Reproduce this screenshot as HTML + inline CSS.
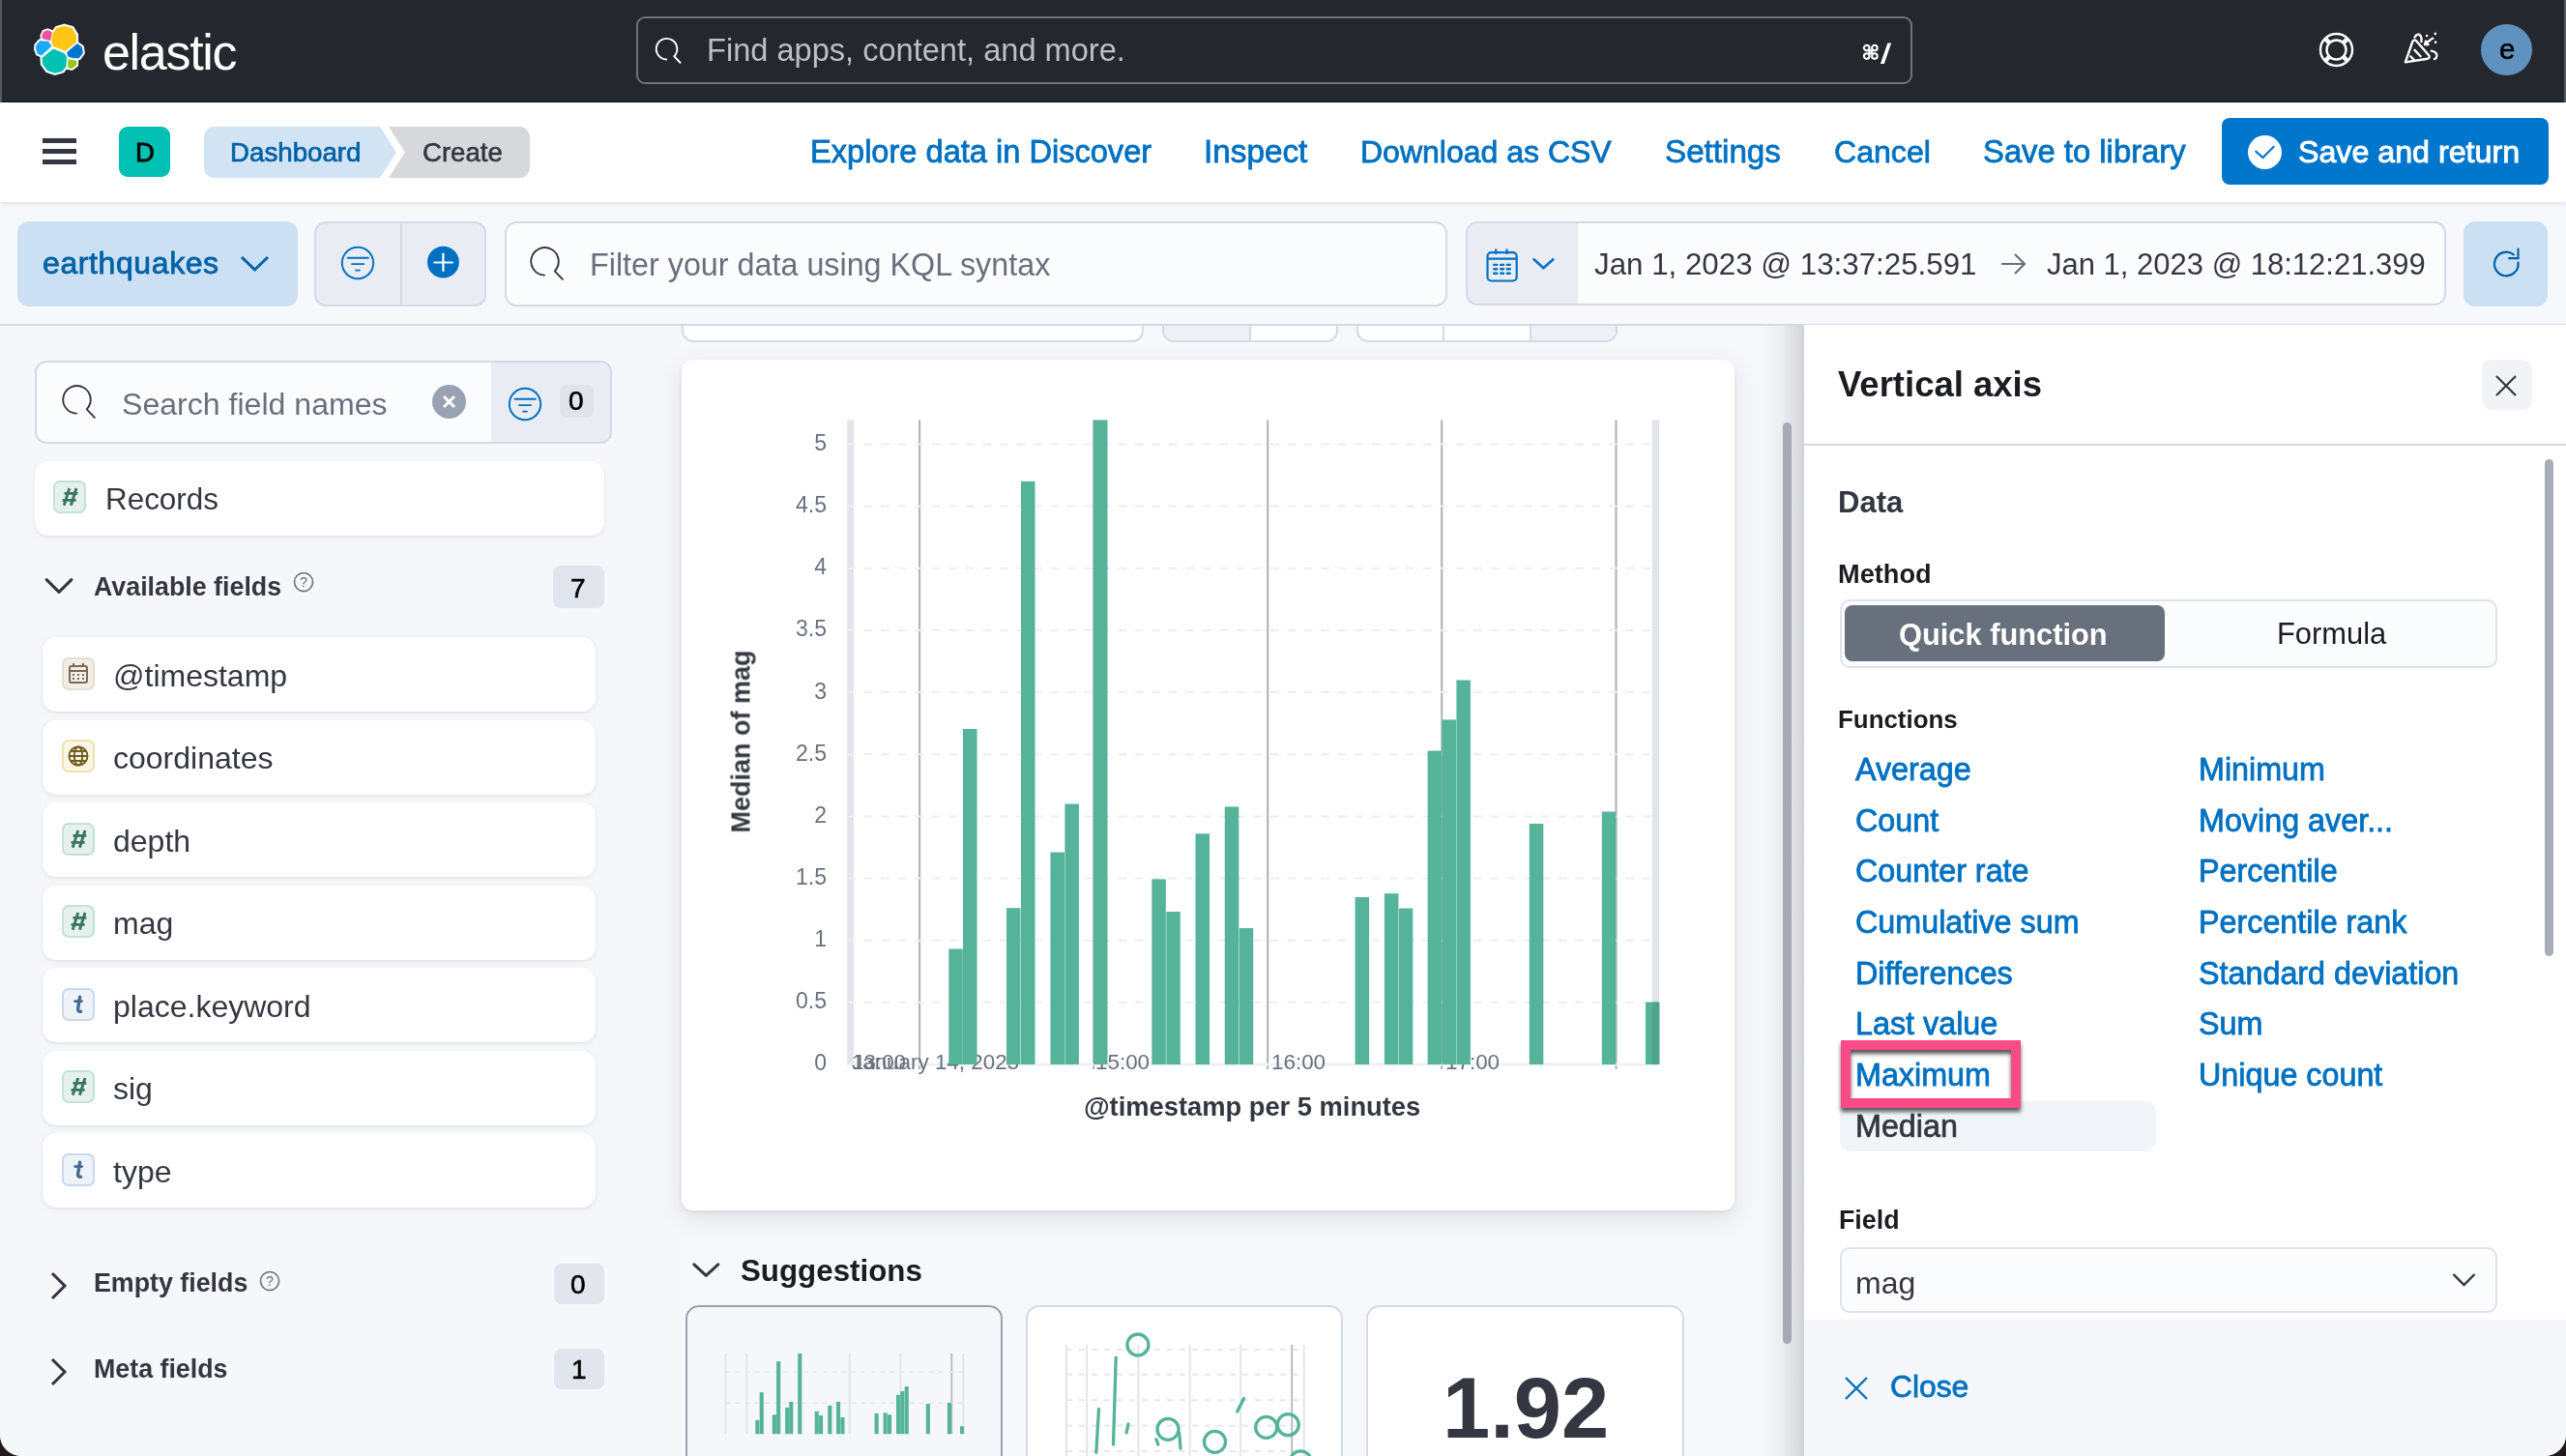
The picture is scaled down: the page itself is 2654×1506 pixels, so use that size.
<!DOCTYPE html><html><head><meta charset="utf-8"><style>
html,body{margin:0;padding:0;}
body{width:2654px;height:1506px;overflow:hidden;position:relative;background:#221a1a;font-family:"Liberation Sans", sans-serif;}
#win{position:absolute;left:0;top:0;width:2654px;height:1506px;background:#F7F8FC;border-radius:0 0 22px 22px;overflow:hidden;}
.t{position:absolute;white-space:nowrap;line-height:1;will-change:transform;}
.r{position:absolute;}
</style></head><body><div id="win">
<div class="r" style="left:0.0px;top:336.0px;width:704.0px;height:1170.0px;background:#F5F7FA;border-radius:0;"></div>
<div class="r" style="left:0.0px;top:0.0px;width:2654.0px;height:106.0px;background:#25272F;border-radius:0;"></div>
<div class="r" style="left:0.0px;top:105.0px;width:2654.0px;height:1.0px;background:#16181D;border-radius:0;"></div>
<div class="r" style="left:0.0px;top:0.0px;width:2.0px;height:106.0px;background:#55585F;border-radius:0;"></div>
<div class="r" style="left:2652.0px;top:0.0px;width:2.0px;height:106.0px;background:#55585F;border-radius:0;"></div>
<svg class="r" style="left:30px;top:20px" width="65" height="65" viewBox="0 0 1456 1456"><polygon points="300,380 340,290 430,255 530,295 495,490 310,445" fill="#fff" stroke="#fff" stroke-width="90" stroke-linejoin="round"/><polygon points="540,340 640,200 820,150 1000,200 1100,360 1100,530 840,740 540,620 520,500" fill="#fff" stroke="#fff" stroke-width="90" stroke-linejoin="round"/><polygon points="165,600 250,500 450,510 525,620 290,840 200,800 160,700" fill="#fff" stroke="#fff" stroke-width="90" stroke-linejoin="round"/><polygon points="880,760 1120,560 1230,640 1250,780 1160,900 1000,895 900,860" fill="#fff" stroke="#fff" stroke-width="90" stroke-linejoin="round"/><polygon points="300,890 560,680 830,790 880,880 860,1100 780,1200 600,1250 420,1190 310,1040" fill="#fff" stroke="#fff" stroke-width="90" stroke-linejoin="round"/><polygon points="910,930 1100,960 1100,1060 990,1140 900,1120" fill="#fff" stroke="#fff" stroke-width="90" stroke-linejoin="round"/><polygon points="304,379 342,292 429,259 525,297 492,485 313,442" fill="#F04E98" stroke="#F04E98" stroke-width="14" stroke-linejoin="round"/><polygon points="549,342 645,207 819,159 993,207 1089,362 1089,526 838,728 549,612 529,497" fill="#FEC514" stroke="#FEC514" stroke-width="14" stroke-linejoin="round"/><polygon points="169,602 251,505 444,515 517,621 290,833 203,795 165,698" fill="#1BA9F5" stroke="#1BA9F5" stroke-width="14" stroke-linejoin="round"/><polygon points="887,760 1118,567 1225,645 1244,780 1157,895 1003,891 906,857" fill="#0077CC" stroke="#0077CC" stroke-width="14" stroke-linejoin="round"/><polygon points="311,894 562,691 822,797 871,884 851,1097 774,1193 601,1241 427,1183 321,1039" fill="#00BFB3" stroke="#00BFB3" stroke-width="14" stroke-linejoin="round"/><polygon points="913,934 1096,963 1096,1059 990,1137 904,1117" fill="#93C90E" stroke="#93C90E" stroke-width="14" stroke-linejoin="round"/></svg>
<div class="t" style="left:106.0px;top:27.7px;font-size:52px;color:#FFFFFF;font-weight:400;letter-spacing:-1.3px;">elastic</div>
<div class="r" style="left:657.5px;top:17.0px;width:1320.0px;height:70.0px;background:#25272F;border-radius:9px;border:2px solid #717378;box-sizing:border-box;"></div>
<svg class="r" style="left:671.0px;top:33.3px" width="37.9" height="37.9" viewBox="0 0 50 50"><path d="M24 37.6 A14.25 14.25 0 1 1 34.7 33.3 L42.9 41.9" fill="none" stroke="#FFFFFF" stroke-width="2.51" stroke-linecap="round" stroke-linejoin="round"/></svg>
<div class="t" style="left:731.0px;top:35.7px;font-size:32.6px;color:#BDBFC4;font-weight:400;">Find apps, content, and more.</div>
<svg class="r" style="left:1925.0px;top:44.0px;" width="34" height="24" viewBox="0 0 34 24"><g fill="none" stroke="#fff" stroke-width="2.1"><path d="M8.4 8.4 H11.2 V11.3 H8.4 Z"/><circle cx="5.7" cy="5.6" r="2.8"/><circle cx="13.9" cy="5.6" r="2.8"/><circle cx="5.7" cy="14.1" r="2.8"/><circle cx="13.9" cy="14.1" r="2.8"/></g><polygon points="19.9,22 23.8,22 31.2,0.6 27.4,0.6" fill="#fff"/></svg>
<svg class="r" style="left:2396.0px;top:31.0px;" width="41" height="41" viewBox="0 0 41 41"><g fill="none" stroke="#fff" stroke-width="2.4">
<circle cx="20.5" cy="20.5" r="16.5"/><circle cx="20.5" cy="20.5" r="10"/>
<path d="M8.8 8.8 L13.4 13.4 M32.2 8.8 L27.6 13.4 M8.8 32.2 L13.4 27.6 M32.2 32.2 L27.6 27.6" stroke-width="4.5"/></g></svg>
<svg class="r" style="left:2380px;top:15px" width="274" height="75" viewBox="0 0 2566 702"><g fill="none" stroke="#fff" stroke-width="22" stroke-linecap="round" stroke-linejoin="round"><path d="M1010 462 L1080 262 Q1095 235 1115 255 L1238 395 Q1252 418 1225 428 Z"/><path d="M1060 405 L1092 437 M1100 345 L1158 405"/><path d="M1100 220 Q1130 170 1160 210 Q1170 230 1165 262"/><path d="M1198 290 L1262 238 M1198 290 L1232 292 M1198 290 L1208 258"/><path d="M1262 352 Q1318 362 1315 402 Q1312 425 1292 432"/></g><g fill="#fff"><circle cx="1218" cy="205" r="12"/><circle cx="1275" cy="232" r="12"/><circle cx="1300" cy="186" r="12"/><circle cx="1302" cy="268" r="12"/></g></svg>
<div class="r" style="left:2566.0px;top:25.0px;width:53.0px;height:53.0px;background:#6092C0;border-radius:50%;"></div>
<div class="t" style="left:2584.5px;top:36.0px;font-size:29.5px;color:#000;font-weight:400;-webkit-text-stroke:0.5px #000;">e</div>
<div class="r" style="left:0.0px;top:106.0px;width:2654.0px;height:103.0px;background:#FFFFFF;border-radius:0;box-shadow:0 2px 5px rgba(52,55,65,0.12);"></div>
<div class="r" style="left:44.0px;top:143.1px;width:35.0px;height:4.7px;background:#343741;border-radius:0;"></div>
<div class="r" style="left:44.0px;top:154.0px;width:35.0px;height:4.7px;background:#343741;border-radius:0;"></div>
<div class="r" style="left:44.0px;top:164.9px;width:35.0px;height:4.7px;background:#343741;border-radius:0;"></div>
<div class="r" style="left:123.3px;top:131.0px;width:52.7px;height:52.0px;background:#00BFB3;border-radius:9px;"></div>
<div class="t" style="left:139.5px;top:143.9px;font-size:27.5px;color:#000;font-weight:400;-webkit-text-stroke:0.8px #000;">D</div>
<svg class="r" style="left:211.0px;top:131.0px;" width="338" height="53" viewBox="0 0 338 53"><path d="M11 0 L182 0 L199 26.5 L182 53 L11 53 A11 11 0 0 1 0 42 L0 11 A11 11 0 0 1 11 0 Z" fill="#D2E3F4"/>
<path d="M191 0 L326 0 A11 11 0 0 1 337 11 L337 42 A11 11 0 0 1 326 53 L191 53 L207.8 26.5 Z" fill="#D7D8DB"/></svg>
<div class="t" style="left:237.5px;top:143.7px;font-size:27.7px;color:#0061A6;font-weight:400;-webkit-text-stroke:0.7px #0061A6;">Dashboard</div>
<div class="t" style="left:436.5px;top:143.7px;font-size:27.6px;color:#343741;font-weight:400;-webkit-text-stroke:0.6px #343741;">Create</div>
<div class="t" style="left:837.5px;top:140.8px;font-size:32.6px;color:#0071C2;font-weight:400;-webkit-text-stroke:0.8px #0071C2;">Explore data in Discover</div>
<div class="t" style="left:1244.5px;top:140.2px;font-size:33.3px;color:#0071C2;font-weight:400;-webkit-text-stroke:0.8px #0071C2;">Inspect</div>
<div class="t" style="left:1407.0px;top:141.3px;font-size:32px;color:#0071C2;font-weight:400;-webkit-text-stroke:0.8px #0071C2;">Download as CSV</div>
<div class="t" style="left:1721.5px;top:140.3px;font-size:33.2px;color:#0071C2;font-weight:400;-webkit-text-stroke:0.8px #0071C2;">Settings</div>
<div class="t" style="left:1896.5px;top:141.2px;font-size:32.1px;color:#0071C2;font-weight:400;-webkit-text-stroke:0.8px #0071C2;">Cancel</div>
<div class="t" style="left:2051.0px;top:140.6px;font-size:32.8px;color:#0071C2;font-weight:400;-webkit-text-stroke:0.8px #0071C2;">Save to library</div>
<div class="r" style="left:2298.0px;top:122.4px;width:338.0px;height:69.1px;background:#0077CC;border-radius:8px;"></div>
<svg class="r" style="left:2324.0px;top:139.0px;" width="37" height="37" viewBox="0 0 37 37"><circle cx="18.5" cy="18.5" r="17.5" fill="#fff"/><path d="M9.2 17.6 L16.5 24.1 L27.7 12.7" fill="none" stroke="#0077CC" stroke-width="2.1" stroke-linecap="round"/></svg>
<div class="t" style="left:2377.0px;top:141.1px;font-size:32.2px;color:#FFFFFF;font-weight:400;-webkit-text-stroke:0.9px #FFFFFF;">Save and return</div>
<div class="r" style="left:0.0px;top:335.0px;width:2654.0px;height:2.0px;background:#D3DAE6;border-radius:0;"></div>
<div class="r" style="left:18.0px;top:229.0px;width:289.7px;height:87.8px;background:#CCE0F3;border-radius:12px;"></div>
<div class="t" style="left:44.0px;top:255.6px;font-size:32px;color:#0061A6;font-weight:400;-webkit-text-stroke:0.8px #0061A6;letter-spacing:0.6px;">earthquakes</div>
<svg class="r" style="left:247.0px;top:262.0px;" width="33" height="20" viewBox="0 0 33 20"><path d="M3 4 L16.5 17 L30 4" fill="none" stroke="#0061A6" stroke-width="3"/></svg>
<div class="r" style="left:325.0px;top:229.0px;width:178.3px;height:88.0px;background:#E9EDF3;border-radius:12px;border:2px solid #D3DAE6;box-sizing:border-box;"></div>
<div class="r" style="left:414.0px;top:229.0px;width:2.0px;height:88.0px;background:#D3DAE6;border-radius:0;"></div>
<svg class="r" style="left:349.5px;top:252.3px" width="40.0" height="40.0" viewBox="0 0 40 40"><g fill="none" stroke="#0071C2" stroke-width="1.95" stroke-linecap="round"><circle cx="20" cy="20" r="16.2"/><path d="M9.6 14.7 H30.9 M14 21.1 H26.2 M18 27.6 H21.9"/></g></svg>
<svg class="r" style="left:440.0px;top:253.0px;" width="37" height="37" viewBox="0 0 37 37"><circle cx="18.4" cy="18.2" r="16.4" fill="#0071C2"/><path d="M18.4 9.5 V27 M9.2 18.5 H27.9" stroke="#fff" stroke-width="2.2" stroke-linecap="round"/></svg>
<div class="r" style="left:521.5px;top:229.0px;width:975.5px;height:88.0px;background:#FBFCFD;border-radius:12px;border:2px solid #D3DAE6;box-sizing:border-box;"></div>
<svg class="r" style="left:538.8px;top:247.3px" width="50.0" height="50.0" viewBox="0 0 50 50"><path d="M24 37.6 A14.25 14.25 0 1 1 34.7 33.3 L42.9 41.9" fill="none" stroke="#343741" stroke-width="1.90" stroke-linecap="round" stroke-linejoin="round"/></svg>
<div class="t" style="left:610.0px;top:258.2px;font-size:32.3px;color:#69707D;font-weight:400;">Filter your data using KQL syntax</div>
<div class="r" style="left:1515.8px;top:228.8px;width:1014.2px;height:87.1px;background:#FBFCFD;border-radius:12px;border:2px solid #D3DAE6;box-sizing:border-box;"></div>
<div class="r" style="left:1517.8px;top:230.8px;width:114.2px;height:83.1px;background:#E9EDF3;border-radius:10px 0 0 10px;"></div>
<svg class="r" style="left:1535.0px;top:256.0px;" width="38" height="38" viewBox="0 0 38 38"><g fill="none" stroke="#0071C2" stroke-width="2.2"><rect x="3.5" y="5.2" width="30.2" height="29.3" rx="4"/><path d="M3.5 11.7 H33.7 M12.2 1.5 V7 M23.5 1.5 V7"/></g>
<g stroke="#0071C2" stroke-width="2.4" stroke-linecap="round"><path d="M10.3 17.9 H13.2 M17.2 17.9 H20 M23.8 17.9 H26.7 M10.3 22.3 H13.2 M17.2 22.3 H20 M23.8 22.3 H26.7 M10.3 26.7 H13.2 M17.2 26.7 H20 M23.8 26.7 H26.7"/></g></svg>
<svg class="r" style="left:1584.0px;top:264.0px;" width="26" height="16" viewBox="0 0 26 16"><path d="M2.5 4.3 L12.4 13.3 L22.4 4.3" fill="none" stroke="#0071C2" stroke-width="2.6" stroke-linecap="round" stroke-linejoin="round"/></svg>
<div class="t" style="left:1649.0px;top:258.0px;font-size:31.3px;color:#343741;font-weight:400;">Jan 1, 2023 @ 13:37:25.591</div>
<svg class="r" style="left:2068.0px;top:260.0px;" width="30" height="26" viewBox="0 0 30 26"><path d="M2 13 H26 M16 3 L26 13 L16 23" fill="none" stroke="#69707D" stroke-width="2.2"/></svg>
<div class="t" style="left:2117.0px;top:258.3px;font-size:31px;color:#343741;font-weight:400;">Jan 1, 2023 @ 18:12:21.399</div>
<div class="r" style="left:2548.0px;top:228.7px;width:87.0px;height:87.9px;background:#CCE0F3;border-radius:12px;"></div>
<svg class="r" style="left:2575.0px;top:254.0px;" width="36" height="36" viewBox="0 0 36 36"><g fill="none" stroke="#0061A6" stroke-width="2.2" stroke-linecap="round"><path d="M24.8 9.3 A12.3 12.3 0 1 0 29.5 17.6"/><path d="M29.5 3.5 V13.2 H20.2"/></g></svg>
<div class="r" style="left:35.5px;top:372.6px;width:597.9px;height:86.4px;background:#FBFCFD;border-radius:12px;border:2px solid #D3DAE6;box-sizing:border-box;"></div>
<div class="r" style="left:508.0px;top:374.6px;width:123.4px;height:82.4px;background:#E9EDF3;border-radius:0 10px 10px 0;"></div>
<svg class="r" style="left:55.2px;top:390.0px" width="50.0" height="50.0" viewBox="0 0 50 50"><path d="M24 37.6 A14.25 14.25 0 1 1 34.7 33.3 L42.9 41.9" fill="none" stroke="#343741" stroke-width="1.90" stroke-linecap="round" stroke-linejoin="round"/></svg>
<div class="t" style="left:126.0px;top:401.8px;font-size:32.1px;color:#69707D;font-weight:400;">Search field names</div>
<svg class="r" style="left:446.8px;top:398.0px;" width="35" height="35" viewBox="0 0 35 35"><circle cx="17.5" cy="17.5" r="17.5" fill="#98A2B3"/><path d="M12 12 L23 23 M23 12 L12 23" stroke="#fff" stroke-width="3"/></svg>
<svg class="r" style="left:523.4px;top:398.0px" width="40.0" height="40.0" viewBox="0 0 40 40"><g fill="none" stroke="#0071C2" stroke-width="1.95" stroke-linecap="round"><circle cx="20" cy="20" r="16.2"/><path d="M9.6 14.7 H30.9 M14 21.1 H26.2 M18 27.6 H21.9"/></g></svg>
<div class="r" style="left:578.8px;top:397.7px;width:34.9px;height:34.7px;background:#DFE4EC;border-radius:7px;"></div>
<div class="t" style="left:587.5px;top:401.3px;font-size:28px;color:#000;font-weight:400;-webkit-text-stroke:0.6px #000;">0</div>
<div class="r" style="left:35.5px;top:477.4px;width:589.2px;height:76.4px;background:#FFFFFF;border-radius:14px;box-shadow:0 1px 3px rgba(52,55,65,0.08),0 2px 6px rgba(52,55,65,0.05);"></div>
<div class="r" style="left:55.4px;top:497.3px;width:34.0px;height:34.0px;background:#E6F1EE;border-radius:7px;border:2px solid #C2E2D8;box-sizing:border-box;"></div>
<svg class="r" style="left:55.4px;top:497.3px;" width="34" height="34" viewBox="0 0 34 34"><g stroke="#387765" stroke-width="2.9" stroke-linecap="butt"><path d="M16.8 8 L11.2 25.8 M24 8 L18.4 25.8 M11.5 13.4 H25.3 M9.6 20.4 H23.6"/></g></svg>
<div class="t" style="left:108.5px;top:500.7px;font-size:31.4px;color:#343741;font-weight:400;">Records</div>
<svg class="r" style="left:45.0px;top:596.0px;" width="34" height="20" viewBox="0 0 34 20"><path d="M3.2 3.6 L16 16.4 L28.9 3.6" fill="none" stroke="#343741" stroke-width="3.2" stroke-linecap="round" stroke-linejoin="round"/></svg>
<div class="t" style="left:96.5px;top:593.9px;font-size:26.8px;color:#343741;font-weight:700;">Available fields</div>
<svg class="r" style="left:303.0px;top:591.0px;" width="22" height="22" viewBox="0 0 22 22"><circle cx="11" cy="11" r="9.5" fill="none" stroke="#69707D" stroke-width="1.6"/><text x="11" y="16" font-size="14" text-anchor="middle" fill="#69707D" font-family="Liberation Sans">?</text></svg>
<div class="r" style="left:572.0px;top:585.0px;width:52.7px;height:43.8px;background:#E0E5EE;border-radius:8px;"></div>
<div class="t" style="left:589.5px;top:594.8px;font-size:28px;color:#000;font-weight:400;-webkit-text-stroke:0.6px #000;">7</div>
<div class="r" style="left:44.2px;top:659.0px;width:571.8px;height:77.0px;background:#FFFFFF;border-radius:14px;box-shadow:0 1px 3px rgba(52,55,65,0.08),0 2px 6px rgba(52,55,65,0.05);"></div>
<div class="r" style="left:64.4px;top:679.5px;width:34.0px;height:34.0px;background:#F1EEE8;border-radius:7px;border:2px solid #E6DED0;box-sizing:border-box;"></div>
<svg class="r" style="left:70.4px;top:684.5px;" width="22" height="24" viewBox="0 0 22 24"><g fill="none" stroke="#7B6B50" stroke-width="2"><rect x="2" y="4" width="18" height="17" rx="2"/><path d="M2 9 H20 M6 1 V5 M16 1 V5"/></g><g fill="#7B6B50"><rect x="5" y="12" width="2" height="2"/><rect x="10" y="12" width="2" height="2"/><rect x="15" y="12" width="2" height="2"/><rect x="5" y="16" width="2" height="2"/><rect x="10" y="16" width="2" height="2"/><rect x="15" y="16" width="2" height="2"/></g></svg>
<div class="t" style="left:116.5px;top:682.5px;font-size:32px;color:#343741;font-weight:400;">@timestamp</div>
<div class="r" style="left:44.2px;top:744.5px;width:571.8px;height:77.0px;background:#FFFFFF;border-radius:14px;box-shadow:0 1px 3px rgba(52,55,65,0.08),0 2px 6px rgba(52,55,65,0.05);"></div>
<div class="r" style="left:64.4px;top:765.0px;width:34.0px;height:34.0px;background:#FBF6E4;border-radius:7px;border:2px solid #EFE1AE;box-sizing:border-box;"></div>
<svg class="r" style="left:69.4px;top:770.0px;" width="24" height="24" viewBox="0 0 24 24"><g fill="none" stroke="#6F5E20" stroke-width="1.9"><circle cx="12" cy="12" r="9.5"/><path d="M2.5 12 H21.5 M4.5 7 H19.5 M4.5 17 H19.5"/><ellipse cx="12" cy="12" rx="4.2" ry="9.5"/></g></svg>
<div class="t" style="left:116.5px;top:768.0px;font-size:32px;color:#343741;font-weight:400;">coordinates</div>
<div class="r" style="left:44.2px;top:830.0px;width:571.8px;height:77.0px;background:#FFFFFF;border-radius:14px;box-shadow:0 1px 3px rgba(52,55,65,0.08),0 2px 6px rgba(52,55,65,0.05);"></div>
<div class="r" style="left:64.4px;top:850.5px;width:34.0px;height:34.0px;background:#E6F1EE;border-radius:7px;border:2px solid #C2E2D8;box-sizing:border-box;"></div>
<svg class="r" style="left:64.4px;top:850.5px;" width="34" height="34" viewBox="0 0 34 34"><g stroke="#387765" stroke-width="2.9" stroke-linecap="butt"><path d="M16.8 8 L11.2 25.8 M24 8 L18.4 25.8 M11.5 13.4 H25.3 M9.6 20.4 H23.6"/></g></svg>
<div class="t" style="left:116.5px;top:853.5px;font-size:32px;color:#343741;font-weight:400;">depth</div>
<div class="r" style="left:44.2px;top:915.5px;width:571.8px;height:77.0px;background:#FFFFFF;border-radius:14px;box-shadow:0 1px 3px rgba(52,55,65,0.08),0 2px 6px rgba(52,55,65,0.05);"></div>
<div class="r" style="left:64.4px;top:936.0px;width:34.0px;height:34.0px;background:#E6F1EE;border-radius:7px;border:2px solid #C2E2D8;box-sizing:border-box;"></div>
<svg class="r" style="left:64.4px;top:936.0px;" width="34" height="34" viewBox="0 0 34 34"><g stroke="#387765" stroke-width="2.9" stroke-linecap="butt"><path d="M16.8 8 L11.2 25.8 M24 8 L18.4 25.8 M11.5 13.4 H25.3 M9.6 20.4 H23.6"/></g></svg>
<div class="t" style="left:116.5px;top:939.0px;font-size:32px;color:#343741;font-weight:400;">mag</div>
<div class="r" style="left:44.2px;top:1001.0px;width:571.8px;height:77.0px;background:#FFFFFF;border-radius:14px;box-shadow:0 1px 3px rgba(52,55,65,0.08),0 2px 6px rgba(52,55,65,0.05);"></div>
<div class="r" style="left:64.4px;top:1021.5px;width:34.0px;height:34.0px;background:#EEF3F9;border-radius:7px;border:2px solid #C9D8EC;box-sizing:border-box;"></div>
<svg class="r" style="left:64.4px;top:1021.5px;" width="34" height="34" viewBox="0 0 34 34"><g fill="none" stroke="#456C90" stroke-width="3.4" stroke-linecap="round"><path d="M18.6 9.2 L16.6 21.5 Q16.2 24.6 19.6 24.2"/><path d="M13.6 13.6 H20.6" stroke-width="2.8"/></g></svg>
<div class="t" style="left:116.5px;top:1024.5px;font-size:32px;color:#343741;font-weight:400;">place.keyword</div>
<div class="r" style="left:44.2px;top:1086.5px;width:571.8px;height:77.0px;background:#FFFFFF;border-radius:14px;box-shadow:0 1px 3px rgba(52,55,65,0.08),0 2px 6px rgba(52,55,65,0.05);"></div>
<div class="r" style="left:64.4px;top:1107.0px;width:34.0px;height:34.0px;background:#E6F1EE;border-radius:7px;border:2px solid #C2E2D8;box-sizing:border-box;"></div>
<svg class="r" style="left:64.4px;top:1107.0px;" width="34" height="34" viewBox="0 0 34 34"><g stroke="#387765" stroke-width="2.9" stroke-linecap="butt"><path d="M16.8 8 L11.2 25.8 M24 8 L18.4 25.8 M11.5 13.4 H25.3 M9.6 20.4 H23.6"/></g></svg>
<div class="t" style="left:116.5px;top:1110.0px;font-size:32px;color:#343741;font-weight:400;">sig</div>
<div class="r" style="left:44.2px;top:1172.0px;width:571.8px;height:77.0px;background:#FFFFFF;border-radius:14px;box-shadow:0 1px 3px rgba(52,55,65,0.08),0 2px 6px rgba(52,55,65,0.05);"></div>
<div class="r" style="left:64.4px;top:1192.5px;width:34.0px;height:34.0px;background:#EEF3F9;border-radius:7px;border:2px solid #C9D8EC;box-sizing:border-box;"></div>
<svg class="r" style="left:64.4px;top:1192.5px;" width="34" height="34" viewBox="0 0 34 34"><g fill="none" stroke="#456C90" stroke-width="3.4" stroke-linecap="round"><path d="M18.6 9.2 L16.6 21.5 Q16.2 24.6 19.6 24.2"/><path d="M13.6 13.6 H20.6" stroke-width="2.8"/></g></svg>
<div class="t" style="left:116.5px;top:1195.5px;font-size:32px;color:#343741;font-weight:400;">type</div>
<svg class="r" style="left:50.0px;top:1314.0px;" width="22" height="32" viewBox="0 0 22 32"><path d="M4 3 L17 16 L4 29" fill="none" stroke="#343741" stroke-width="3"/></svg>
<div class="t" style="left:96.5px;top:1314.3px;font-size:26.8px;color:#343741;font-weight:700;">Empty fields</div>
<svg class="r" style="left:268.4px;top:1313.6px;" width="22" height="22" viewBox="0 0 22 22"><circle cx="11" cy="11" r="9.5" fill="none" stroke="#69707D" stroke-width="1.6"/><text x="11" y="16" font-size="14" text-anchor="middle" fill="#69707D" font-family="Liberation Sans">?</text></svg>
<div class="r" style="left:572.5px;top:1306.6px;width:52.1px;height:42.4px;background:#E0E5EE;border-radius:8px;"></div>
<div class="t" style="left:590.0px;top:1314.8px;font-size:28px;color:#000;font-weight:400;-webkit-text-stroke:0.6px #000;">0</div>
<svg class="r" style="left:50.0px;top:1402.5px;" width="22" height="32" viewBox="0 0 22 32"><path d="M4 3 L17 16 L4 29" fill="none" stroke="#343741" stroke-width="3"/></svg>
<div class="t" style="left:96.5px;top:1403.1px;font-size:26.8px;color:#343741;font-weight:700;">Meta fields</div>
<div class="r" style="left:572.5px;top:1394.5px;width:52.1px;height:42.5px;background:#E0E5EE;border-radius:8px;"></div>
<div class="t" style="left:591.0px;top:1402.8px;font-size:28px;color:#000;font-weight:400;-webkit-text-stroke:0.6px #000;">1</div>
<div class="r" style="left:704.5px;top:336px;width:478.5px;height:17.6px;overflow:hidden;"><div style="position:absolute;left:0;top:-20px;width:478.5px;height:37.6px;box-sizing:border-box;border:2px solid #D3DAE6;border-radius:0 0 12px 12px;background:#fff;"></div></div>
<div class="r" style="left:1202px;top:336px;width:181.5999999999999px;height:17.6px;overflow:hidden;"><div style="position:absolute;left:0;top:-20px;width:181.5999999999999px;height:37.6px;box-sizing:border-box;border:2px solid #D3DAE6;border-radius:0 0 12px 12px;background:#fff;"></div></div>
<div class="r" style="left:1403px;top:336px;width:270px;height:17.6px;overflow:hidden;"><div style="position:absolute;left:0;top:-20px;width:270px;height:37.6px;box-sizing:border-box;border:2px solid #D3DAE6;border-radius:0 0 12px 12px;background:#fff;"></div></div>
<div class="r" style="left:1204.0px;top:336.0px;width:88.7px;height:15.6px;background:#EEF0F5;border-radius:0 0 0 10px;"></div>
<div class="r" style="left:1291.7px;top:336.0px;width:2.0px;height:17.6px;background:#D3DAE6;border-radius:0;"></div>
<div class="r" style="left:1583.4px;top:336.0px;width:87.6px;height:15.6px;background:#EEF0F5;border-radius:0 0 10px 0;"></div>
<div class="r" style="left:1491.6px;top:336.0px;width:2.0px;height:17.6px;background:#D3DAE6;border-radius:0;"></div>
<div class="r" style="left:1582.4px;top:336.0px;width:2.0px;height:17.6px;background:#D3DAE6;border-radius:0;"></div>
<div class="r" style="left:0.0px;top:335.0px;width:2654.0px;height:2.0px;background:#D3DAE6;border-radius:0;"></div>
<div class="r" style="left:704.5px;top:371.7px;width:1089.5px;height:879.9px;background:#FFFFFF;border-radius:12px;box-shadow:0 2px 4px rgba(52,55,65,0.07),0 8px 24px rgba(52,55,65,0.13);"></div>
<svg class="r" style="left:0.0px;top:0.0px;pointer-events:none;" width="2654" height="1506" viewBox="0 0 2654 1506"><rect x="876.2" y="434.4" width="6.8" height="667" fill="#E2E4E9"/><rect x="1708.7" y="434.4" width="7.3" height="667" fill="#E2E4E9"/><line x1="951.1" y1="434.4" x2="951.1" y2="1106" stroke="#B4B5B8" stroke-width="2.2"/><line x1="1131.2" y1="434.4" x2="1131.2" y2="1106" stroke="#B4B5B8" stroke-width="2.2"/><line x1="1311.2" y1="434.4" x2="1311.2" y2="1106" stroke="#B4B5B8" stroke-width="2.2"/><line x1="1491.2" y1="434.4" x2="1491.2" y2="1106" stroke="#B4B5B8" stroke-width="2.2"/><line x1="1671.5" y1="434.4" x2="1671.5" y2="1106" stroke="#B4B5B8" stroke-width="2.2"/><line x1="876.5" y1="1036.8" x2="1716" y2="1036.8" stroke="#ECEEF2" stroke-width="2" stroke-dasharray="8.5 9"/><line x1="876.5" y1="972.7" x2="1716" y2="972.7" stroke="#ECEEF2" stroke-width="2" stroke-dasharray="8.5 9"/><line x1="876.5" y1="908.5" x2="1716" y2="908.5" stroke="#ECEEF2" stroke-width="2" stroke-dasharray="8.5 9"/><line x1="876.5" y1="844.4" x2="1716" y2="844.4" stroke="#ECEEF2" stroke-width="2" stroke-dasharray="8.5 9"/><line x1="876.5" y1="780.2" x2="1716" y2="780.2" stroke="#ECEEF2" stroke-width="2" stroke-dasharray="8.5 9"/><line x1="876.5" y1="716.1" x2="1716" y2="716.1" stroke="#ECEEF2" stroke-width="2" stroke-dasharray="8.5 9"/><line x1="876.5" y1="651.9" x2="1716" y2="651.9" stroke="#ECEEF2" stroke-width="2" stroke-dasharray="8.5 9"/><line x1="876.5" y1="587.8" x2="1716" y2="587.8" stroke="#ECEEF2" stroke-width="2" stroke-dasharray="8.5 9"/><line x1="876.5" y1="523.6" x2="1716" y2="523.6" stroke="#ECEEF2" stroke-width="2" stroke-dasharray="8.5 9"/><line x1="876.5" y1="459.5" x2="1716" y2="459.5" stroke="#ECEEF2" stroke-width="2" stroke-dasharray="8.5 9"/><line x1="876" y1="1101" x2="1716" y2="1101" stroke="#EEF0F3" stroke-width="3"/><text x="881" y="1105.6" font-family="Liberation Sans" font-size="22.4" fill="#69707D">13:00</text><text x="881" y="1105.6" font-family="Liberation Sans" font-size="22.4" fill="#69707D">January 14, 2023</text><text x="1133" y="1105.6" font-family="Liberation Sans" font-size="22.4" fill="#69707D">15:00</text><text x="1315" y="1105.6" font-family="Liberation Sans" font-size="22.4" fill="#69707D">16:00</text><text x="1495" y="1105.6" font-family="Liberation Sans" font-size="22.4" fill="#69707D">17:00</text><rect x="981.3" y="981.5" width="14.5" height="119.5" fill="#54B399"/><rect x="996.0" y="754.0" width="14.5" height="347.0" fill="#54B399"/><rect x="1041.0" y="939.2" width="14.5" height="161.8" fill="#54B399"/><rect x="1056.0" y="497.9" width="14.5" height="603.1" fill="#54B399"/><rect x="1086.5" y="881.5" width="14.5" height="219.5" fill="#54B399"/><rect x="1101.4" y="831.5" width="14.5" height="269.5" fill="#54B399"/><rect x="1131.0" y="434.4" width="14.5" height="666.6" fill="#54B399"/><rect x="1191.3" y="909.4" width="14.5" height="191.6" fill="#54B399"/><rect x="1206.3" y="943.0" width="14.5" height="158.0" fill="#54B399"/><rect x="1236.5" y="862.3" width="14.5" height="238.7" fill="#54B399"/><rect x="1266.8" y="834.4" width="14.5" height="266.6" fill="#54B399"/><rect x="1281.7" y="960.0" width="14.5" height="141.0" fill="#54B399"/><rect x="1401.6" y="928.0" width="14.5" height="173.0" fill="#54B399"/><rect x="1431.9" y="924.2" width="14.5" height="176.8" fill="#54B399"/><rect x="1446.8" y="939.5" width="14.5" height="161.5" fill="#54B399"/><rect x="1476.6" y="776.6" width="14.5" height="324.4" fill="#54B399"/><rect x="1491.5" y="744.4" width="14.5" height="356.6" fill="#54B399"/><rect x="1506.4" y="703.5" width="14.5" height="397.5" fill="#54B399"/><rect x="1581.8" y="852.0" width="14.5" height="249.0" fill="#54B399"/><rect x="1656.8" y="839.5" width="14.5" height="261.5" fill="#54B399"/><rect x="1702.0" y="1036.6" width="14.5" height="64.4" fill="#54B399"/><rect x="1708.7" y="1036.6" width="7.3" height="64.4" fill="#50A38C"/></svg>
<div class="t" style="left:0px;width:855px;text-align:right;top:1088.4px;font-size:23px;color:#69707D;">0</div>
<div class="t" style="left:0px;width:855px;text-align:right;top:1024.2px;font-size:23px;color:#69707D;">0.5</div>
<div class="t" style="left:0px;width:855px;text-align:right;top:960.1px;font-size:23px;color:#69707D;">1</div>
<div class="t" style="left:0px;width:855px;text-align:right;top:895.9px;font-size:23px;color:#69707D;">1.5</div>
<div class="t" style="left:0px;width:855px;text-align:right;top:831.8px;font-size:23px;color:#69707D;">2</div>
<div class="t" style="left:0px;width:855px;text-align:right;top:767.6px;font-size:23px;color:#69707D;">2.5</div>
<div class="t" style="left:0px;width:855px;text-align:right;top:703.5px;font-size:23px;color:#69707D;">3</div>
<div class="t" style="left:0px;width:855px;text-align:right;top:639.3px;font-size:23px;color:#69707D;">3.5</div>
<div class="t" style="left:0px;width:855px;text-align:right;top:575.2px;font-size:23px;color:#69707D;">4</div>
<div class="t" style="left:0px;width:855px;text-align:right;top:511.0px;font-size:23px;color:#69707D;">4.5</div>
<div class="t" style="left:0px;width:855px;text-align:right;top:446.9px;font-size:23px;color:#69707D;">5</div>
<div class="t" style="left:767px;top:766.8px;font-size:27px;font-weight:700;color:#343741;transform:translate(-50%,-50%) rotate(-90deg);">Median of mag</div>
<div class="t" style="left:1121.0px;top:1130.9px;font-size:27.3px;color:#343741;font-weight:700;">@timestamp per 5 minutes</div>
<svg class="r" style="left:715.0px;top:1303.0px;" width="32" height="22" viewBox="0 0 32 22"><path d="M2.8 4.8 L15.3 16.4 L27.8 4.8" fill="none" stroke="#343741" stroke-width="3" stroke-linecap="round" stroke-linejoin="round"/></svg>
<div class="t" style="left:765.5px;top:1299.0px;font-size:31.3px;color:#1A1C21;font-weight:700;">Suggestions</div>
<div class="r" style="left:708.7px;top:1349.5px;width:328.8px;height:190.5px;background:#F5F7FA;border-radius:14px;border:2.5px solid #98A2B3;box-sizing:border-box;"></div>
<div class="r" style="left:1060.6px;top:1349.5px;width:328.2px;height:190.5px;background:#FFFFFF;border-radius:14px;border:2px solid #D3DAE6;box-sizing:border-box;"></div>
<div class="r" style="left:1412.8px;top:1349.5px;width:328.8px;height:190.5px;background:#FFFFFF;border-radius:14px;border:2px solid #D3DAE6;box-sizing:border-box;"></div>
<div class="t" style="left:1492.0px;top:1412.6px;font-size:88.5px;color:#343741;font-weight:700;">1.92</div>
<svg class="r" style="left:700.0px;top:1340.0px;" width="330" height="166" viewBox="0 0 330 166"><line x1="50.5" y1="60.0" x2="50.5" y2="143.2" stroke="#E3E5E9" stroke-width="2"/><line x1="72.3" y1="60.0" x2="72.3" y2="143.2" stroke="#E3E5E9" stroke-width="2"/><line x1="178.7" y1="60.0" x2="178.7" y2="143.2" stroke="#E3E5E9" stroke-width="2"/><line x1="231.3" y1="60.0" x2="231.3" y2="143.2" stroke="#E3E5E9" stroke-width="2"/><line x1="296.3" y1="60.0" x2="296.3" y2="143.2" stroke="#E3E5E9" stroke-width="2"/><line x1="284.3" y1="60.0" x2="284.3" y2="143.2" stroke="#B8BCC3" stroke-width="2"/><line x1="50.5" y1="79.1" x2="296.3" y2="79.1" stroke="#E6E8EC" stroke-width="1.5" stroke-dasharray="5 5"/><line x1="50.5" y1="111.3" x2="296.3" y2="111.3" stroke="#E6E8EC" stroke-width="1.5" stroke-dasharray="5 5"/><rect x="81.3" y="128.8" width="4.1" height="14.5" fill="#54B399"/><rect x="85.7" y="100.1" width="4.1" height="43.1" fill="#54B399"/><rect x="98.8" y="123.3" width="4.1" height="19.9" fill="#54B399"/><rect x="103.1" y="68.2" width="4.1" height="75.0" fill="#54B399"/><rect x="112.1" y="115.9" width="4.1" height="27.3" fill="#54B399"/><rect x="116.2" y="109.9" width="4.1" height="33.3" fill="#54B399"/><rect x="125.2" y="60.0" width="4.1" height="83.2" fill="#54B399"/><rect x="142.7" y="119.8" width="4.1" height="23.5" fill="#54B399"/><rect x="147.0" y="124.1" width="4.1" height="19.1" fill="#54B399"/><rect x="156.3" y="113.8" width="4.1" height="29.5" fill="#54B399"/><rect x="165.0" y="109.9" width="4.1" height="33.3" fill="#54B399"/><rect x="169.4" y="126.0" width="4.1" height="17.2" fill="#54B399"/><rect x="204.6" y="121.9" width="4.1" height="21.3" fill="#54B399"/><rect x="213.6" y="121.4" width="4.1" height="21.8" fill="#54B399"/><rect x="218.0" y="123.3" width="4.1" height="19.9" fill="#54B399"/><rect x="227.0" y="102.8" width="4.1" height="40.4" fill="#54B399"/><rect x="231.3" y="99.0" width="4.1" height="44.2" fill="#54B399"/><rect x="235.7" y="94.1" width="4.1" height="49.1" fill="#54B399"/><rect x="257.8" y="112.1" width="4.1" height="31.1" fill="#54B399"/><rect x="279.9" y="111.0" width="4.1" height="32.2" fill="#54B399"/><rect x="293.0" y="135.3" width="4.1" height="7.9" fill="#54B399"/></svg>
<svg class="r" style="left:700.0px;top:1340.0px;" width="700" height="166" viewBox="0 0 700 166"><line x1="402.9" y1="51.0" x2="402.9" y2="166" stroke="#E3E5E9" stroke-width="2"/><line x1="424.2" y1="51.0" x2="424.2" y2="166" stroke="#E3E5E9" stroke-width="2"/><line x1="477.4" y1="51.0" x2="477.4" y2="166" stroke="#E3E5E9" stroke-width="2"/><line x1="530.6" y1="51.0" x2="530.6" y2="166" stroke="#E3E5E9" stroke-width="2"/><line x1="583.2" y1="51.0" x2="583.2" y2="166" stroke="#E3E5E9" stroke-width="2"/><line x1="648.7" y1="51.0" x2="648.7" y2="166" stroke="#E3E5E9" stroke-width="2"/><line x1="636.2" y1="51.0" x2="636.2" y2="166" stroke="#B8BCC3" stroke-width="2"/><line x1="402.9" y1="55.9" x2="648.7" y2="55.9" stroke="#E6E8EC" stroke-width="2" stroke-dasharray="6 7"/><line x1="402.9" y1="81.8" x2="648.7" y2="81.8" stroke="#E6E8EC" stroke-width="2" stroke-dasharray="6 7"/><line x1="402.9" y1="108.3" x2="648.7" y2="108.3" stroke="#E6E8EC" stroke-width="2" stroke-dasharray="6 7"/><line x1="402.9" y1="134.5" x2="648.7" y2="134.5" stroke="#E6E8EC" stroke-width="2" stroke-dasharray="6 7"/><line x1="402.9" y1="161.0" x2="648.7" y2="161.0" stroke="#E6E8EC" stroke-width="2" stroke-dasharray="6 7"/><circle cx="476.9" cy="51.0" r="11" fill="none" stroke="#54B399" stroke-width="3.3"/><circle cx="508.0" cy="138.3" r="11" fill="none" stroke="#54B399" stroke-width="3.3"/><circle cx="556.5" cy="151.4" r="11" fill="none" stroke="#54B399" stroke-width="3.3"/><circle cx="609.7" cy="136.4" r="11" fill="none" stroke="#54B399" stroke-width="3.3"/><circle cx="632.3" cy="133.7" r="11" fill="none" stroke="#54B399" stroke-width="3.3"/><circle cx="645.2" cy="171.9" r="11" fill="none" stroke="#54B399" stroke-width="3.3"/><line x1="433.8" y1="162.3" x2="436.5" y2="117.3" stroke="#54B399" stroke-width="3.3" stroke-linecap="round"/><line x1="451.5" y1="154.1" x2="454.2" y2="64.1" stroke="#54B399" stroke-width="3.3" stroke-linecap="round"/><line x1="465.1" y1="141.9" x2="467.0" y2="132.9" stroke="#54B399" stroke-width="3.3" stroke-linecap="round"/><line x1="495.9" y1="148.7" x2="497.9" y2="154.1" stroke="#54B399" stroke-width="3.3" stroke-linecap="round"/><line x1="519.7" y1="141.9" x2="521.0" y2="158.2" stroke="#54B399" stroke-width="3.3" stroke-linecap="round"/><line x1="579.7" y1="120.0" x2="586.5" y2="106.4" stroke="#54B399" stroke-width="3.3" stroke-linecap="round"/></svg>
<div class="r" style="left:1822.0px;top:336.0px;width:44.0px;height:1170.0px;background:linear-gradient(90deg, rgba(213,214,218,0) 0%, rgba(213,214,218,0.35) 50%, rgba(210,211,216,1) 100%);border-radius:0;"></div>
<div class="r" style="left:1843.9px;top:437.0px;width:9.0px;height:953.0px;background:#A5AAB3;border-radius:5px;"></div>
<div class="r" style="left:1866.0px;top:336.0px;width:788.0px;height:1170.0px;background:#FFFFFF;border-radius:0;"></div>
<div class="t" style="left:1901.0px;top:380.0px;font-size:36.5px;color:#1A1C21;font-weight:700;">Vertical axis</div>
<div class="r" style="left:2566.5px;top:372.2px;width:52.3px;height:52.3px;background:#F1F3F7;border-radius:10px;"></div>
<svg class="r" style="left:2579.0px;top:386.0px;" width="26" height="26" viewBox="0 0 26 26"><path d="M3 3 L23 23 M23 3 L3 23" stroke="#343741" stroke-width="2.2"/></svg>
<div class="r" style="left:1866.0px;top:459.0px;width:788.0px;height:2.0px;background:#D3DAE6;border-radius:0;"></div>
<div class="r" style="left:2632.0px;top:475.3px;width:9.0px;height:514.0px;background:#A8AEB8;border-radius:5px;"></div>
<div class="t" style="left:1901.0px;top:503.7px;font-size:31.1px;color:#343741;font-weight:700;">Data</div>
<div class="t" style="left:1901.0px;top:579.8px;font-size:27.2px;color:#1A1C21;font-weight:700;">Method</div>
<div class="r" style="left:1902.5px;top:620.3px;width:680.8px;height:71.0px;background:#FBFCFD;border-radius:10px;border:2px solid #DDE2EB;box-sizing:border-box;"></div>
<div class="r" style="left:1908.2px;top:626.0px;width:330.6px;height:58.3px;background:#69707D;border-radius:8px;"></div>
<div class="t" style="left:1964.0px;top:641.5px;font-size:30.8px;color:#FFFFFF;font-weight:700;">Quick function</div>
<div class="t" style="left:2354.5px;top:641.4px;font-size:30.9px;color:#1A1C21;font-weight:400;">Formula</div>
<div class="t" style="left:1901.0px;top:731.6px;font-size:25.9px;color:#1A1C21;font-weight:700;">Functions</div>
<div class="t" style="left:1919.0px;top:780.1px;font-size:32.3px;color:#0071C2;font-weight:400;-webkit-text-stroke:0.8px #0071C2;">Average</div>
<div class="t" style="left:2273.5px;top:780.1px;font-size:32.3px;color:#0071C2;font-weight:400;-webkit-text-stroke:0.8px #0071C2;">Minimum</div>
<div class="t" style="left:1919.0px;top:832.7px;font-size:32.3px;color:#0071C2;font-weight:400;-webkit-text-stroke:0.8px #0071C2;">Count</div>
<div class="t" style="left:2273.5px;top:832.7px;font-size:32.3px;color:#0071C2;font-weight:400;-webkit-text-stroke:0.8px #0071C2;">Moving aver...</div>
<div class="t" style="left:1919.0px;top:885.4px;font-size:32.3px;color:#0071C2;font-weight:400;-webkit-text-stroke:0.8px #0071C2;">Counter rate</div>
<div class="t" style="left:2273.5px;top:885.4px;font-size:32.3px;color:#0071C2;font-weight:400;-webkit-text-stroke:0.8px #0071C2;">Percentile</div>
<div class="t" style="left:1919.0px;top:938.0px;font-size:32.3px;color:#0071C2;font-weight:400;-webkit-text-stroke:0.8px #0071C2;">Cumulative sum</div>
<div class="t" style="left:2273.5px;top:938.0px;font-size:32.3px;color:#0071C2;font-weight:400;-webkit-text-stroke:0.8px #0071C2;">Percentile rank</div>
<div class="t" style="left:1919.0px;top:990.7px;font-size:32.3px;color:#0071C2;font-weight:400;-webkit-text-stroke:0.8px #0071C2;">Differences</div>
<div class="t" style="left:2273.5px;top:990.7px;font-size:32.3px;color:#0071C2;font-weight:400;-webkit-text-stroke:0.8px #0071C2;">Standard deviation</div>
<div class="t" style="left:1919.0px;top:1043.4px;font-size:32.3px;color:#0071C2;font-weight:400;-webkit-text-stroke:0.8px #0071C2;">Last value</div>
<div class="t" style="left:2273.5px;top:1043.4px;font-size:32.3px;color:#0071C2;font-weight:400;-webkit-text-stroke:0.8px #0071C2;">Sum</div>
<div class="t" style="left:1919.0px;top:1096.0px;font-size:32.3px;color:#0071C2;font-weight:400;-webkit-text-stroke:0.8px #0071C2;">Maximum</div>
<div class="t" style="left:2273.5px;top:1096.0px;font-size:32.3px;color:#0071C2;font-weight:400;-webkit-text-stroke:0.8px #0071C2;">Unique count</div>
<div class="r" style="left:1902.6px;top:1139.0px;width:327.0px;height:52.4px;background:#F1F4F8;border-radius:12px;"></div>
<div class="t" style="left:1919.0px;top:1148.7px;font-size:32.3px;color:#343741;font-weight:400;-webkit-text-stroke:0.7px #343741;">Median</div>
<div class="r" style="left:1904.2px;top:1076.2px;width:185.6px;height:69.4px;background:transparent;border-radius:0;border:10px solid #FA4A87;box-sizing:border-box;box-shadow:0 4px 4px rgba(40,44,44,0.75), inset 0 4px 4px rgba(40,44,44,0.8);"></div>
<div class="t" style="left:1901.5px;top:1249.3px;font-size:26.8px;color:#1A1C21;font-weight:700;">Field</div>
<div class="r" style="left:1902.6px;top:1289.6px;width:680.7px;height:68.8px;background:#FBFCFD;border-radius:10px;border:2px solid #DDE2EB;box-sizing:border-box;"></div>
<div class="t" style="left:1919.0px;top:1310.5px;font-size:32px;color:#343741;font-weight:400;">mag</div>
<svg class="r" style="left:2535.0px;top:1315.0px;" width="27" height="18" viewBox="0 0 27 18"><path d="M2.5 3 L13.5 14 L24.5 3" fill="none" stroke="#343741" stroke-width="2.4"/></svg>
<div class="r" style="left:1866.0px;top:1364.8px;width:788.0px;height:141.2px;background:#F5F7FA;border-radius:0;"></div>
<svg class="r" style="left:1906.0px;top:1422.0px;" width="28" height="28" viewBox="0 0 28 28"><path d="M3 3 L25 25 M25 3 L3 25" stroke="#0071C2" stroke-width="2.4"/></svg>
<div class="t" style="left:1954.5px;top:1418.9px;font-size:31.8px;color:#0071C2;font-weight:400;-webkit-text-stroke:0.8px #0071C2;">Close</div>
</div></body></html>
